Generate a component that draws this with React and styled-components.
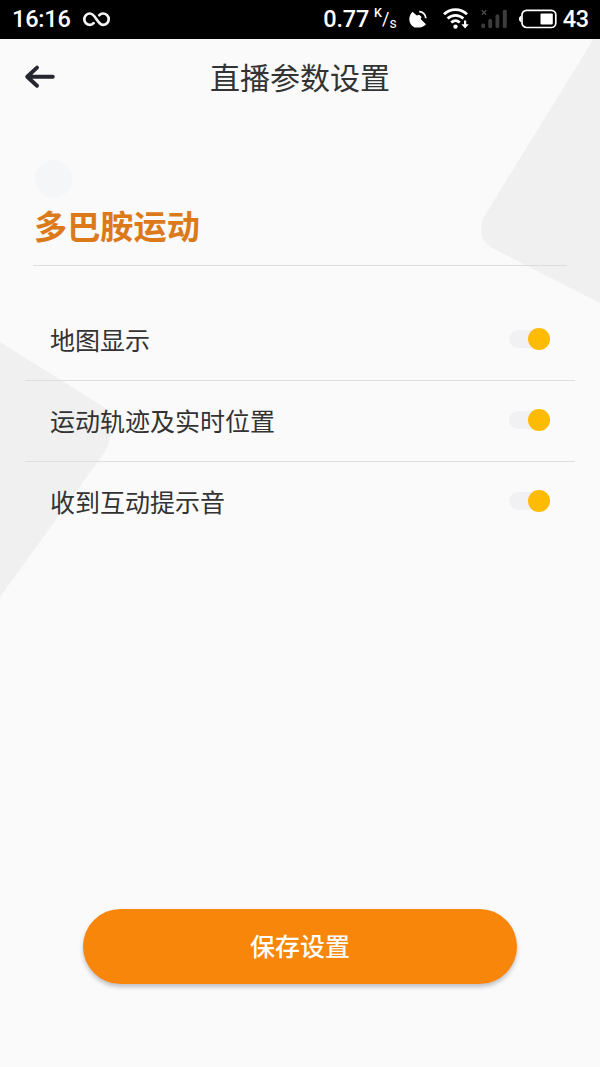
import React, { useState } from "react";
import styled, { createGlobalStyle } from "styled-components";

const OPTIONS = [
  { id: "map", label: "地图显示" },
  { id: "track", label: "运动轨迹及实时位置" },
  { id: "sound", label: "收到互动提示音" },
];

export default function App() {
  const [enabled, setEnabled] = useState({
    map: true,
    track: true,
    sound: true,
  });

  const toggle = (id) => setEnabled((prev) => ({ ...prev, [id]: !prev[id] }));

  return (
    <>
      <GlobalStyle />
      <Screen>
        <Backdrop viewBox="0 0 600 1067" aria-hidden="true">
          <path d="M593.500 39 L484.500 216 Q475.500 237 491 247.500 L600 303 V39 Z" />
          <path d="M0 342 L103 406.500 Q114 416 111 434 Q110 444 104 453 L0 597 Z" />
        </Backdrop>
        <StatusBar />
        <Header>
          <BackButton aria-label="返回">
            <ArrowIcon />
          </BackButton>
          <PageTitle>直播参数设置</PageTitle>
        </Header>
        <Profile>
          <Avatar />
          <Name>多巴胺运动</Name>
        </Profile>
        <List>
          {OPTIONS.map((option) => (
            <Row key={option.id}>
              <Label>{option.label}</Label>
              <Switch
                role="switch"
                aria-checked={enabled[option.id]}
                aria-label={option.label}
                onClick={() => toggle(option.id)}
              >
                <Thumb $on={enabled[option.id]} />
              </Switch>
            </Row>
          ))}
        </List>
        <Footer>
          <SaveButton>保存设置</SaveButton>
        </Footer>
      </Screen>
    </>
  );
}

function StatusBar() {
  return (
    <Bar>
      <BarText>16:16</BarText>
      <InfinityIcon />
      <Spacer />
      <BarText>0.77</BarText>
      <Unit>
        <UnitTop>K</UnitTop>
        <UnitSlash>/</UnitSlash>
        <UnitBottom>s</UnitBottom>
      </Unit>
      <DishIcon />
      <WifiIcon />
      <SignalIcon />
      <BatteryIcon />
      <Battery>43</Battery>
    </Bar>
  );
}

function InfinityIcon() {
  return (
    <Icon width="28" height="16" viewBox="0 0 28 16" $left={12}>
      <path
        fill="none"
        stroke="#f4f4f4"
        strokeWidth="2.700"
        strokeLinecap="round"
        d="M10.600 12.200 C9.600 13.300 8.500 13.900 7 13.900 A5.700 5.700 0 0 1 7 2.500 C12.300 2.500 14.700 13.900 20 13.900 A5.700 5.700 0 0 0 20 2.500 C18.500 2.500 17.400 3.100 16.400 4.200"
      />
    </Icon>
  );
}

function DishIcon() {
  return (
    <Icon width="18" height="18" viewBox="0 0 18 18" $left={12}>
      <path
        fill="#fff"
        d="M3.400 1.800 L7.800 5.600 L10.200 4.800 L12.600 7 L11.600 9 L17 14.200 C15.300 16.200 13 17.300 10.500 17.500 H5.500 C2.500 16 0.300 13 0.300 9.500 C0.300 6.500 1.500 3.800 3.400 1.800 Z"
      />
      <path
        fill="none"
        stroke="#fff"
        strokeWidth="1.800"
        d="M10.200 1.600 A6.600 6.600 0 0 1 16.800 8.200"
      />
    </Icon>
  );
}

function WifiIcon() {
  return (
    <Icon width="26" height="22" viewBox="0 0 26 22" $left={16}>
      <g fill="none" stroke="#fff" strokeWidth="2.700">
        <path d="M1 6.200 C7.500 0 17.500 0 24 6.200" />
        <path d="M4.600 10.600 C9.200 6.300 15.800 6.300 20.400 10.600" />
        <path d="M8.200 14.600 C10.900 12.100 14.100 12.100 16.800 14.600" />
      </g>
      <circle cx="12.500" cy="18.600" r="2.200" fill="#fff" />
      <path fill="#fff" d="M21 12.600 h2.200 v3.600 h2.600 L22.100 20.600 L18.400 16.200 H21 Z" />
    </Icon>
  );
}

function SignalIcon() {
  return (
    <Icon width="26" height="20" viewBox="0 0 26 20" $left={12}>
      <path
        fill="none"
        stroke="#4a4a4a"
        strokeWidth="1.300"
        d="M0.800 1.200 L5.200 5.800 M5.200 1.200 L0.800 5.800"
      />
      <g fill="#3c3c3c">
        <rect x="0.300" y="14.500" width="3.800" height="4.500" rx="1.500" />
        <rect x="7.300" y="10" width="3.800" height="9" rx="1.500" />
        <rect x="14.500" y="5.500" width="3.800" height="13.500" rx="1.500" />
        <rect x="21.800" y="0.700" width="4" height="18.300" rx="1.500" />
      </g>
    </Icon>
  );
}

function BatteryIcon() {
  return (
    <Icon width="38" height="20" viewBox="0 0 38 20" $left={12}>
      <path fill="#fff" d="M2.200 6.500 V13.500 C0.800 12.700 0 11.700 0 10 C0 8.300 0.800 7.300 2.200 6.500 Z" />
      <rect
        x="3"
        y="1.300"
        width="33.800"
        height="17.200"
        rx="4.500"
        fill="none"
        stroke="#fff"
        strokeWidth="1.700"
      />
      <rect x="21.500" y="4.500" width="12.300" height="11" rx="1" fill="#fff" />
    </Icon>
  );
}

function ArrowIcon() {
  return (
    <svg width="32" height="26" viewBox="0 0 32 26">
      <path
        d="M13 3.600 L3.200 12.700 L13 21.800 M3.600 12.700 H28.800"
        fill="none"
        stroke="#262630"
        strokeWidth="3.900"
        strokeLinecap="round"
        strokeLinejoin="round"
      />
    </svg>
  );
}

//#region  style

const GlobalStyle = createGlobalStyle`
  * {
    box-sizing: border-box;
  }

  body {
    margin: 0;
    background: #fafafa;
    font-family: "Noto Sans CJK SC", sans-serif;
  }

  button {
    border: none;
    padding: 0;
    background: none;
    font-family: inherit;
    cursor: pointer;
  }
`;

const Screen = styled.main`
  position: relative;
  isolation: isolate;
  display: flex;
  flex-direction: column;
  width: 600px;
  height: 1067px;
  overflow: hidden;
  background: #fafafa;
`;

const Backdrop = styled.svg`
  position: absolute;
  inset: 0;
  z-index: -1;
  width: 100%;
  height: 100%;
  fill: #f0f0f0;
`;

const Bar = styled.div`
  display: flex;
  align-items: center;
  height: 39px;
  padding: 0 11px 2px 12px;
  background: #000;
  color: #fff;
  font-family: Roboto, sans-serif;
  line-height: 1;
`;

const BarText = styled.span`
  padding-top: 2px;
  font-size: 23.5px;
  font-weight: 500;
  letter-spacing: -0.2px;
`;

const Spacer = styled.div`
  flex: 1;
`;

const Unit = styled.span`
  display: flex;
  align-items: center;
  height: 24px;
  margin-left: 5px;
`;

const UnitTop = styled.span`
  align-self: flex-start;
  font-size: 12.5px;
  font-weight: 500;
`;

const UnitSlash = styled.span`
  font-size: 18px;
`;

const UnitBottom = styled.span`
  align-self: flex-end;
  padding-bottom: 1px;
  font-size: 14px;
`;

const Battery = styled(BarText)`
  margin-left: 6px;
`;

const Icon = styled.svg`
  flex: none;
  margin-left: ${({ $left }) => $left}px;
`;

const Header = styled.header`
  display: grid;
  grid-template-columns: 80px 1fr 80px;
  align-items: center;
  height: 76px;
`;

const BackButton = styled.button`
  display: flex;
  padding-left: 24px;
`;

const PageTitle = styled.h1`
  margin: 0;
  padding-bottom: 3px;
  color: #333;
  font-size: 30px;
  font-weight: 400;
  line-height: 44px;
  text-align: center;
`;

const Profile = styled.section`
  display: flex;
  flex-direction: column;
  height: 151px;
  margin: 0 33px;
  padding: 45px 0 0 2px;
  border-bottom: 1px solid #dcdcdc;
`;

const Avatar = styled.div`
  width: 37px;
  height: 38px;
  border-radius: 50%;
  background: #f5f6f8;
`;

const Name = styled.h2`
  margin: 3px 0 0 -1px;
  color: #dc7a1b;
  font-size: 33.2px;
  font-weight: 700;
  line-height: 48px;
`;

const List = styled.ul`
  display: flex;
  flex-direction: column;
  margin: 34px 25px 0;
  padding: 0;
  list-style: none;
`;

const Row = styled.li`
  display: flex;
  align-items: center;
  justify-content: space-between;
  height: 81px;
  padding: 0 25px 1px;

  &:not(:last-child) {
    border-bottom: 1px solid #dedede;
  }

  &:last-child {
    padding-bottom: 2px;
  }
`;

const Label = styled.span`
  padding-bottom: 1px;
  color: #333;
  font-size: 25px;
  line-height: 36px;
`;

const Switch = styled.button`
  display: flex;
  align-items: center;
  width: 41px;
  height: 18px;
  margin-bottom: 1px;
  border-radius: 9px;
  background: #f1f1f4;
`;

const Thumb = styled.span`
  width: 22px;
  height: 22px;
  margin-left: ${({ $on }) => ($on ? "auto" : "0")};
  border-radius: 50%;
  background: ${({ $on }) => ($on ? "#ffba02" : "#fff")};
`;

const Footer = styled.footer`
  display: flex;
  justify-content: center;
  margin-top: auto;
  padding-bottom: 83.5px;
`;

const SaveButton = styled.button`
  width: 434px;
  height: 75px;
  padding-bottom: 2px;
  border-radius: 38px;
  background: #f8860b;
  box-shadow: 0 3px 4px rgba(60, 60, 80, 0.3);
  color: #fff;
  font-size: 25px;
  font-weight: 500;
`;

//#endregion
